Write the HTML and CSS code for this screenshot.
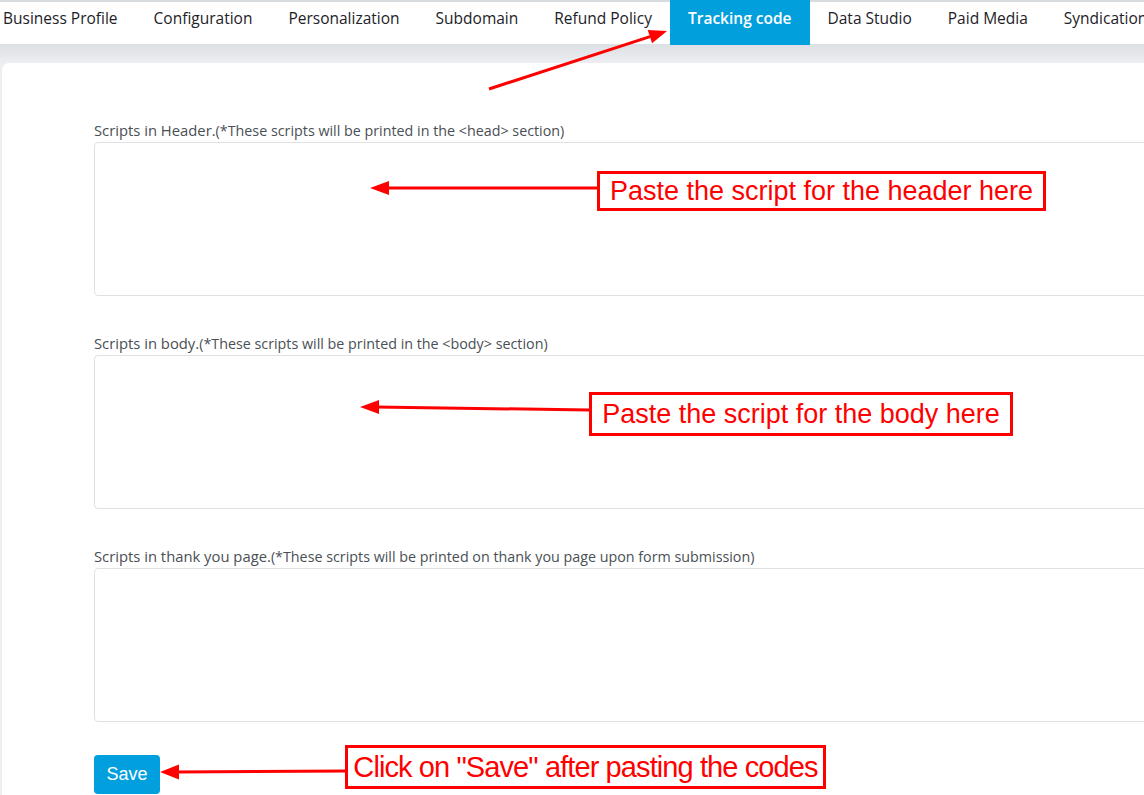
FILE: index.html
```
<!DOCTYPE html>
<html lang="en">
<head>
<meta charset="utf-8">
<title>Tracking code</title>
<link rel="stylesheet" href="styles.css">
</head>
<body>
<div class="page">
  <nav class="tabs">
    <a class="tab">Business Profile</a>
    <a class="tab">Configuration</a>
    <a class="tab">Personalization</a>
    <a class="tab">Subdomain</a>
    <a class="tab">Refund Policy</a>
    <a class="tab active">Tracking code</a>
    <a class="tab">Data Studio</a>
    <a class="tab">Paid Media</a>
    <a class="tab">Syndication</a>
  </nav>
  <div class="band"></div>
  <main class="card">
    <div class="field">
      <label class="label">Scripts in Header.<span class="hint">(*These scripts will be printed in the &lt;head&gt; section)</span></label>
      <textarea class="input"></textarea>
    </div>
    <div class="field">
      <label class="label">Scripts in body.<span class="hint">(*These scripts will be printed in the &lt;body&gt; section)</span></label>
      <textarea class="input"></textarea>
    </div>
    <div class="field">
      <label class="label">Scripts in thank you page.<span class="hint">(*These scripts will be printed on thank you page upon form submission)</span></label>
      <textarea class="input"></textarea>
    </div>
    <button class="save">Save</button>
  </main>

  <svg class="arrows" width="1144" height="795" viewBox="0 0 1144 795">
    <g stroke="#ff0000" stroke-width="3" fill="none">
      <line x1="489" y1="89" x2="650" y2="36.6"/>
      <line x1="598" y1="188" x2="386" y2="188"/>
      <line x1="590" y1="410" x2="376" y2="407"/>
      <line x1="346" y1="771" x2="176" y2="772"/>
    </g>
    <g fill="#ff0000">
      <polygon points="667,31 652.1,43.3 647.7,29.9"/>
      <polygon points="370,188 389,181 389,195"/>
      <polygon points="360,407 379,400 379,414"/>
      <polygon points="160,772 179,764.5 179,779.5"/>
    </g>
  </svg>
  <div class="note note-header">Paste the script for the header here</div>
  <div class="note note-body">Paste the script for the body here</div>
  <div class="note note-save">Click on "Save" after pasting the codes</div>
</div>
</body>
</html>
```
FILE: styles.css
```
html, body {
  margin: 0;
  padding: 0;
  background: #ffffff;
  overflow: hidden;
}

.page {
  position: relative;
  width: 1144px;
  height: 795px;
  overflow: hidden;
  background: #eceef1;
  font-family: "Open Sans", "Liberation Sans", sans-serif;
}

.tabs {
  display: flex;
  height: 44px;
  margin-left: -15px;
  border-top: 2px solid #d9dcdf;
  box-sizing: border-box;
  background: #ffffff;
  white-space: nowrap;
}

.tab {
  display: block;
  padding: 6px 18px 0;
  height: 44px;
  box-sizing: border-box;
  font-size: 15.5px;
  font-weight: 500;
  line-height: 20px;
  color: #1d2228;
  flex: none;
}

.tab.active {
  margin-top: -2px;
  padding-top: 8px;
  height: 45px;
  background: #029fdd;
  color: #ffffff;
  font-weight: 600;
}

.band {
  height: 19px;
  background: linear-gradient(#dcdfe4, #eceef1);
}

.card {
  margin-left: 2px;
  width: 1300px;
  height: 800px;
  background: #ffffff;
  border-radius: 7px 0 0 0;
  padding: 58px 0 0 92px;
  box-sizing: border-box;
}

.field {
  display: flex;
  flex-direction: column;
  margin-bottom: 38px;
}

.label {
  font-size: 14.8px;
  font-weight: 500;
  color: #4a4f55;
  line-height: 18px;
  margin-bottom: 2px;
}

.hint {
  font-size: 14.3px;
}

.input {
  width: 1100px;
  height: 154px;
  box-sizing: border-box;
  border: 1px solid #dde2e6;
  border-radius: 4px;
  resize: none;
  background: #ffffff;
  margin: 0;
}

.save {
  display: block;
  margin-top: -5px;
  width: 66px;
  height: 39px;
  border: none;
  border-radius: 4px;
  background: #029fde;
  color: #ffffff;
  font-family: "Liberation Sans", Arial, sans-serif;
  font-size: 18px;
  padding: 0;
}

.arrows {
  position: absolute;
  left: 0;
  top: 0;
  pointer-events: none;
}

.note {
  position: absolute;
  box-sizing: border-box;
  border: 3px solid #ff0000;
  background: #ffffff;
  color: #ff0000;
  font-family: "Liberation Sans", Arial, sans-serif;
  font-size: 27px;
  text-align: center;
  white-space: nowrap;
}

.note-header {
  left: 597px;
  top: 171px;
  width: 449px;
  height: 40px;
  line-height: 34px;
}

.note-body {
  left: 589px;
  top: 392px;
  width: 424px;
  height: 44px;
  line-height: 38px;
}

.note-save {
  left: 345px;
  top: 745px;
  width: 481px;
  height: 44px;
  line-height: 38px;
  font-size: 29px;
  letter-spacing: -0.9px;
}
```
